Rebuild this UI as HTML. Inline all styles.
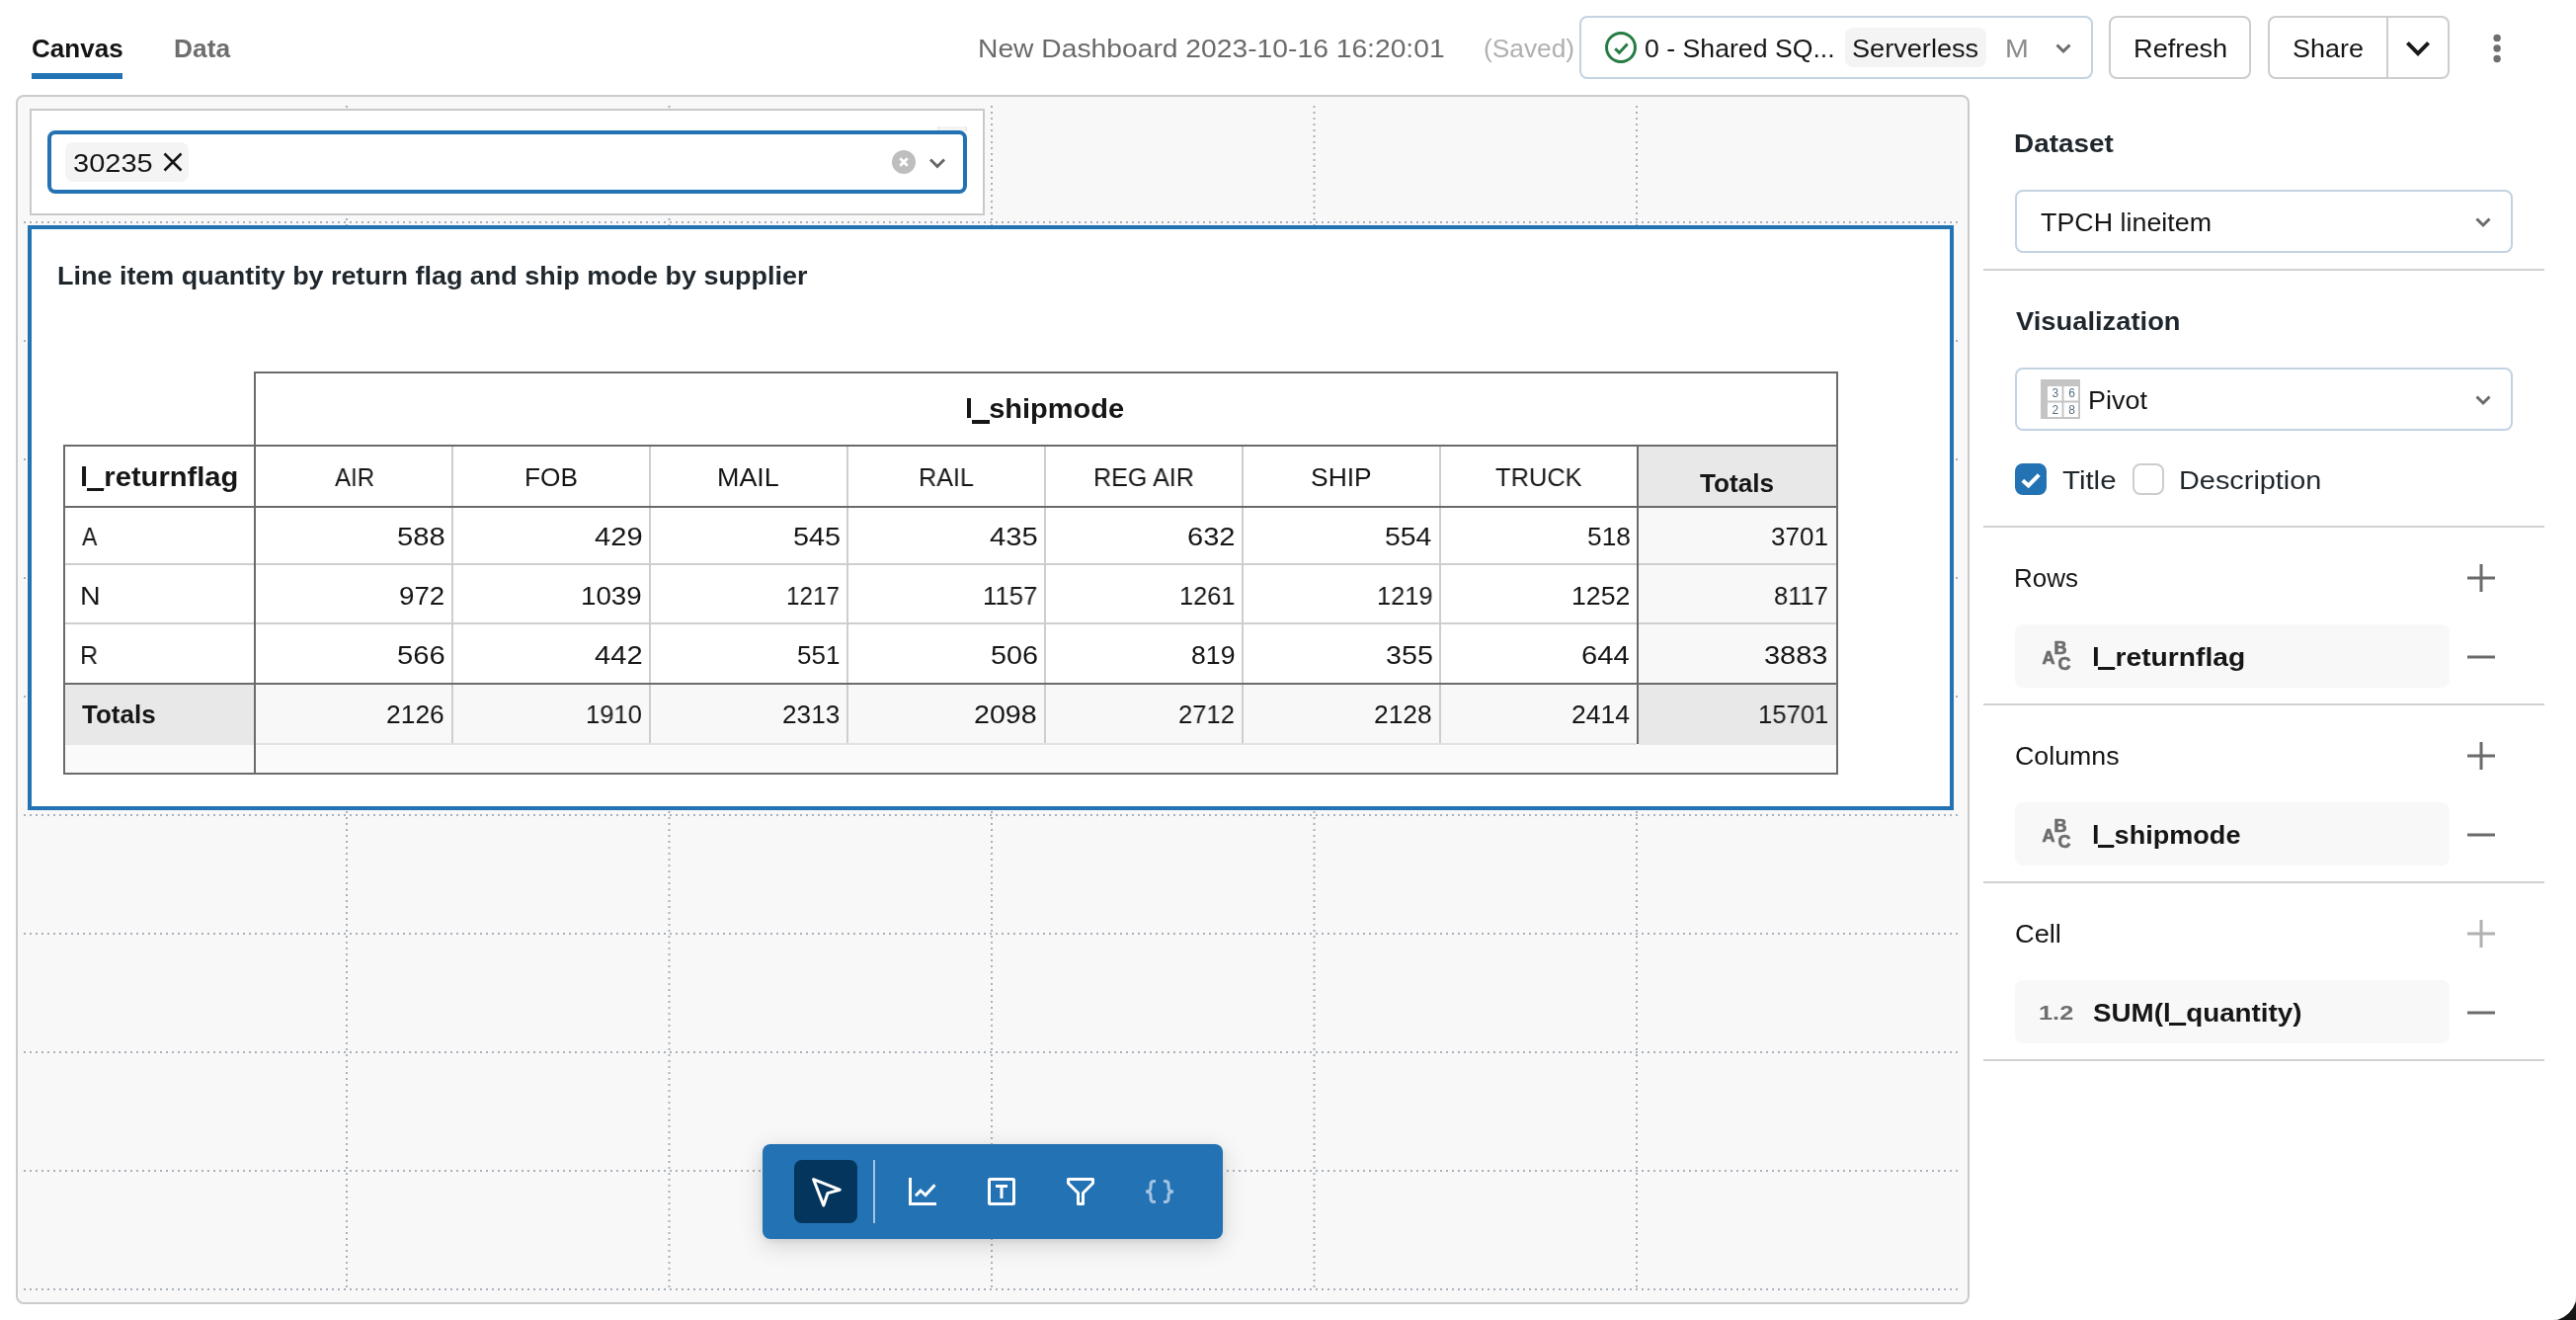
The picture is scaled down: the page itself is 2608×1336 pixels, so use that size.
<!DOCTYPE html>
<html lang="en">
<head>
<meta charset="utf-8">
<title>New Dashboard 2023-10-16 16:20:01</title>
<style>
*{box-sizing:border-box;margin:0;padding:0}
html,body{width:2608px;height:1336px;overflow:hidden;background:#fff}
body{position:relative;font-family:"Liberation Sans",Arial,sans-serif;font-size:26px;color:#161616;line-height:32px}
.abs,svg{position:absolute}
svg{will-change:transform}
#header,#canvas-wrap,#side{position:absolute;left:0;top:0;width:0;height:0;transform:translateZ(0)}
.t{position:absolute;white-space:nowrap;line-height:32px;height:32px;will-change:transform}
.b{font-weight:700}
#tab-ul{left:32px;top:74px;width:92px;height:6px;background:#2272b4}
.btn{position:absolute;top:16px;height:64px;border:2px solid #cdcdcd;border-radius:8px;background:#fff}
#wh{left:1599px;width:520px;border-color:#c3d3e2}
#tag-sl{left:1868px;top:28px;width:143px;height:40px;border-radius:8px;background:#f4f4f4}
#canvas{left:16px;top:96px;width:1978px;height:1224px;border:2px solid #cbcbcb;border-radius:8px;background:#f8f8f8}
#filterw{left:30px;top:110px;width:967px;height:108px;border:2px solid #c9c9c9;background:#fff}
#sel{left:48px;top:132px;width:931px;height:64px;border:4px solid #2272b4;border-radius:8px;background:#fff}
#tag{left:66px;top:144px;width:125px;height:40px;border-radius:8px;background:#f4f4f4}
#pivotw{left:28px;top:228px;width:1950px;height:592px;border:4px solid #2272b4;background:#fff}
.hr{position:absolute;left:2008px;width:568px;height:2px;background:#d1d1d1}
.sel2{position:absolute;left:2040px;width:504px;height:64px;border:2px solid #c3d3e2;border-radius:8px;background:#fff}
.pill{position:absolute;left:2040px;width:440px;height:64px;border-radius:8px;background:#f8f8f8}
.ln{position:absolute}
.dk{background:#6b6b6b}
.lt{background:#cecece}
#toolbar{left:772px;top:1158px;width:466px;height:96px;border-radius:8px;background:#2272b4;box-shadow:0 6px 24px rgba(0,0,0,.16),0 2px 6px rgba(0,0,0,.08)}
#tb-active{left:804px;top:1174px;width:64px;height:64px;border-radius:8px;background:#04355d}
#tb-div{left:884px;top:1174px;width:2px;height:64px;background:#a6c5e1}
.cb{position:absolute;top:469px;width:32px;height:32px;border-radius:8px}
</style>
</head>
<body>
<!-- ===== HEADER ===== -->
<div id="header">
<div class="abs" id="tab-ul"></div>
<div class="btn" id="wh"></div>
<svg style="left:1625px;top:32px" width="32" height="32" viewBox="0 0 32 32"><circle cx="16" cy="16" r="14.5" fill="none" stroke="#277c43" stroke-width="3"/><path d="M10.2 17.2l4.200 4.200 8.200-9" fill="none" stroke="#277c43" stroke-width="3"/></svg>
<div class="abs" id="tag-sl"></div>
<svg style="left:2079px;top:39px" width="20" height="20" viewBox="0 0 20 20"><path d="M3.500 6.500l6.500 6.500 6.500-6.500" fill="none" stroke="#6b6b6b" stroke-width="3"/></svg>
<div class="btn" style="left:2135px;width:144px"></div>
<div class="btn" style="left:2296px;width:184px"></div>
<div class="abs" style="left:2416px;top:18px;width:2px;height:60px;background:#cdcdcd"></div>
<svg style="left:2432px;top:33px" width="32" height="32" viewBox="0 0 32 32"><path d="M5.400 10.400l10.600 10.700 10.600-10.700" fill="none" stroke="#1a1a1a" stroke-width="4"/></svg>
<svg style="left:2522px;top:32px" width="12" height="32" viewBox="0 0 12 32"><circle cx="6.100" cy="6.400" r="3.700" fill="#6e6e6e"/><circle cx="6.100" cy="17" r="3.700" fill="#6e6e6e"/><circle cx="6.100" cy="27.500" r="3.700" fill="#6e6e6e"/></svg>
<div class="t b" style="left:32.20px;top:32.79px;color:#141414;transform:scaleX(1.0022);transform-origin:0 0;">Canvas</div>
<div class="t b" style="left:175.77px;top:32.79px;color:#6e6e6e;transform:scaleX(1.0127);transform-origin:0 0;">Data</div>
<div class="t" style="left:989.73px;top:32.99px;color:#6a6a6a;transform:scaleX(1.0863);transform-origin:0 0;">New Dashboard 2023-10-16 16:20:01</div>
<div class="t" style="left:1502.18px;top:32.99px;color:#b0b0b0;transform:scaleX(1.0114);transform-origin:0 0;">(Saved)</div>
<div class="t" style="left:1665.47px;top:32.79px;transform:scaleX(1.0254);transform-origin:0 0;">0 - Shared SQ...</div>
<div class="t" style="left:1874.71px;top:32.79px;transform:scaleX(1.0433);transform-origin:0 0;">Serverless</div>
<div class="t" style="left:2029.80px;top:32.79px;color:#8c8c8c;transform:scaleX(1.1000);transform-origin:0 0;">M</div>
<div class="t" style="left:2160.21px;top:32.99px;transform:scaleX(1.0460);transform-origin:0 0;">Refresh</div>
<div class="t" style="left:2320.83px;top:32.99px;transform:scaleX(1.0364);transform-origin:0 0;">Share</div>
</div>

<!-- ===== CANVAS ===== -->
<div id="canvas-wrap">
<div class="abs" id="canvas"></div>
<svg id="grid" style="left:0;top:0" width="2000" height="1336" viewBox="0 0 2000 1336">
<g stroke="#a9b1bb" stroke-width="2" stroke-dasharray="2 4" fill="none">
<path d="M351 107V1306M677.500 107V1306M1004 107V1306M1330.500 107V1306M1657 107V1306"/>
<path d="M24 225H1982M24 345H1982M24 465H1982M24 585H1982M24 705H1982M24 825H1982M24 945H1982M24 1065H1982M24 1185H1982M24 1305H1982"/>
</g>
</svg>
<div class="abs" id="filterw"></div>
<div class="abs" style="left:949px;top:128px;width:30px;height:5px;background:#f4f4f4;border-left:2px solid #ececec;border-right:2px solid #ececec"></div>
<div class="abs" id="sel"></div>
<div class="abs" id="tag"></div>
<svg style="left:163px;top:152px" width="24" height="24" viewBox="0 0 24 24"><path d="M3.500 3.500l17 17M20.500 3.500l-17 17" fill="none" stroke="#161616" stroke-width="2.600"/></svg>
<svg style="left:903px;top:152px" width="24" height="24" viewBox="0 0 24 24"><circle cx="12" cy="12" r="12" fill="#bebebe"/><path d="M8.300 8.300l7.400 7.400M15.700 8.300l-7.400 7.400" stroke="#fff" stroke-width="2.700" fill="none"/></svg>
<svg style="left:939px;top:154.800px" width="20" height="20" viewBox="0 0 20 20"><path d="M3 6.500l7 7 7-7" fill="none" stroke="#666" stroke-width="2.800"/></svg>
<div class="abs" id="pivotw"></div>
<div class="t" style="left:74.48px;top:149.29px;transform:scaleX(1.1157);transform-origin:0 0;">30235</div>
<div class="t b" style="left:58.03px;top:262.69px;color:#1f272d;transform:scaleX(1.0368);transform-origin:0 0;">Line item quantity by return flag and ship mode by supplier</div>
<div id="pivot-table">
<div class="ln" style="left:1659px;top:452px;width:200px;height:60px;background:#e8e8e8;"></div>
<div class="ln" style="left:1659px;top:514px;width:200px;height:177px;background:#f8f8f8;"></div>
<div class="ln" style="left:66px;top:693px;width:191px;height:61px;background:#e8e8e8;"></div>
<div class="ln" style="left:259px;top:693px;width:1398px;height:59px;background:#f8f8f8;"></div>
<div class="ln" style="left:1659px;top:693px;width:200px;height:61px;background:#e8e8e8;"></div>
<div class="ln" style="left:66px;top:754px;width:191px;height:28px;background:#fafafa;"></div>
<div class="ln" style="left:259px;top:754px;width:1600px;height:28px;background:#fafafa;"></div>
<div class="ln lt" style="left:457px;top:452px;width:2px;height:300px;"></div>
<div class="ln lt" style="left:657px;top:452px;width:2px;height:300px;"></div>
<div class="ln lt" style="left:857px;top:452px;width:2px;height:300px;"></div>
<div class="ln lt" style="left:1057px;top:452px;width:2px;height:300px;"></div>
<div class="ln lt" style="left:1257px;top:452px;width:2px;height:300px;"></div>
<div class="ln lt" style="left:1457px;top:452px;width:2px;height:300px;"></div>
<div class="ln lt" style="left:66px;top:570px;width:1793px;height:2px;"></div>
<div class="ln lt" style="left:66px;top:630px;width:1793px;height:2px;"></div>
<div class="ln" style="left:259px;top:752px;width:1398px;height:2px;background:#e2e2e2;"></div>
<div class="ln dk" style="left:257px;top:376px;width:1604px;height:2px;"></div>
<div class="ln dk" style="left:64px;top:450px;width:1797px;height:2px;"></div>
<div class="ln dk" style="left:64px;top:512px;width:1797px;height:2px;"></div>
<div class="ln dk" style="left:64px;top:691px;width:1797px;height:2px;"></div>
<div class="ln dk" style="left:64px;top:782px;width:1797px;height:2px;"></div>
<div class="ln dk" style="left:64px;top:450px;width:2px;height:334px;"></div>
<div class="ln dk" style="left:257px;top:376px;width:2px;height:408px;"></div>
<div class="ln dk" style="left:1657px;top:450px;width:2px;height:303px;"></div>
<div class="ln dk" style="left:1859px;top:376px;width:2px;height:408px;"></div>
<div class="t b" style="left:977.43px;top:398.20px;font-size:28px;transform:scaleX(1.0359);transform-origin:0 0;">l_shipmode</div>
<div class="abs" style="left:984.19px;top:425.19px;width:17.33px;height:3.44px;background:#161616"></div>
<div class="t b" style="left:81.22px;top:466.60px;font-size:28px;transform:scaleX(1.0413);transform-origin:0 0;">l_returnflag</div>
<div class="abs" style="left:88.02px;top:493.59px;width:17.42px;height:3.44px;background:#161616"></div>
<div class="t" style="left:338.90px;top:467.29px;transform:scaleX(0.9286);transform-origin:0 0;">AIR</div>
<div class="t" style="left:531.13px;top:467.29px;transform:scaleX(1.0100);transform-origin:0 0;">FOB</div>
<div class="t" style="left:726.33px;top:467.29px;transform:scaleX(1.0345);transform-origin:0 0;">MAIL</div>
<div class="t" style="left:929.81px;top:467.29px;transform:scaleX(0.9691);transform-origin:0 0;">RAIL</div>
<div class="t" style="left:1107.22px;top:467.29px;transform:scaleX(0.9657);transform-origin:0 0;">REG AIR</div>
<div class="t" style="left:1327.36px;top:467.29px;transform:scaleX(1.0175);transform-origin:0 0;">SHIP</div>
<div class="t" style="left:1514.42px;top:467.29px;transform:scaleX(0.9773);transform-origin:0 0;">TRUCK</div>
<div class="t b" style="left:1721.30px;top:473.39px;transform:scaleX(1.0068);transform-origin:0 0;">Totals</div>
<div class="t" style="left:83.30px;top:526.99px;transform:scaleX(0.8882);transform-origin:0 0;">A</div>
<div class="t" style="left:402.08px;top:526.99px;transform:scaleX(1.1220);transform-origin:0 0;">588</div>
<div class="t" style="left:602.18px;top:526.99px;transform:scaleX(1.1195);transform-origin:0 0;">429</div>
<div class="t" style="left:802.69px;top:526.99px;transform:scaleX(1.1073);transform-origin:0 0;">545</div>
<div class="t" style="left:1001.98px;top:526.99px;transform:scaleX(1.1244);transform-origin:0 0;">435</div>
<div class="t" style="left:1202.28px;top:526.99px;transform:scaleX(1.1171);transform-origin:0 0;">632</div>
<div class="t" style="left:1402.21px;top:526.99px;transform:scaleX(1.0929);transform-origin:0 0;">554</div>
<div class="t" style="left:1606.69px;top:526.99px;transform:scaleX(1.0122);transform-origin:0 0;">518</div>
<div class="t" style="left:1792.60px;top:526.99px;transform:scaleX(0.9982);transform-origin:0 0;">3701</div>
<div class="t" style="left:81.10px;top:586.99px;transform:scaleX(1.1000);transform-origin:0 0;">N</div>
<div class="t" style="left:404.43px;top:586.99px;transform:scaleX(1.0659);transform-origin:0 0;">972</div>
<div class="t" style="left:588.37px;top:586.99px;transform:scaleX(1.0673);transform-origin:0 0;">1039</div>
<div class="t" style="left:796.14px;top:586.99px;transform:scaleX(0.9309);transform-origin:0 0;">1217</div>
<div class="t" style="left:994.82px;top:586.99px;transform:scaleX(0.9887);transform-origin:0 0;">1157</div>
<div class="t" style="left:1193.75px;top:586.99px;transform:scaleX(0.9727);transform-origin:0 0;">1261</div>
<div class="t" style="left:1393.65px;top:586.99px;transform:scaleX(0.9745);transform-origin:0 0;">1219</div>
<div class="t" style="left:1590.75px;top:586.99px;transform:scaleX(1.0255);transform-origin:0 0;">1252</div>
<div class="t" style="left:1795.62px;top:586.99px;transform:scaleX(0.9796);transform-origin:0 0;">8117</div>
<div class="t" style="left:81.37px;top:646.99px;transform:scaleX(0.9667);transform-origin:0 0;">R</div>
<div class="t" style="left:402.08px;top:646.99px;transform:scaleX(1.1220);transform-origin:0 0;">566</div>
<div class="t" style="left:602.18px;top:646.99px;transform:scaleX(1.1195);transform-origin:0 0;">442</div>
<div class="t" style="left:807.40px;top:646.99px;transform:scaleX(0.9951);transform-origin:0 0;">551</div>
<div class="t" style="left:1002.69px;top:646.99px;transform:scaleX(1.1073);transform-origin:0 0;">506</div>
<div class="t" style="left:1206.18px;top:646.99px;transform:scaleX(1.0244);transform-origin:0 0;">819</div>
<div class="t" style="left:1402.90px;top:646.99px;transform:scaleX(1.1024);transform-origin:0 0;">355</div>
<div class="t" style="left:1600.98px;top:646.99px;transform:scaleX(1.1214);transform-origin:0 0;">644</div>
<div class="t" style="left:1785.99px;top:646.99px;transform:scaleX(1.1143);transform-origin:0 0;">3883</div>
<div class="t b" style="left:83.30px;top:706.79px;transform:scaleX(0.9959);transform-origin:0 0;">Totals</div>
<div class="t" style="left:391.28px;top:706.79px;transform:scaleX(1.0161);transform-origin:0 0;">2126</div>
<div class="t" style="left:593.24px;top:706.79px;transform:scaleX(0.9818);transform-origin:0 0;">1910</div>
<div class="t" style="left:791.79px;top:706.79px;transform:scaleX(1.0071);transform-origin:0 0;">2313</div>
<div class="t" style="left:986.40px;top:706.79px;transform:scaleX(1.1018);transform-origin:0 0;">2098</div>
<div class="t" style="left:1193.22px;top:706.79px;transform:scaleX(0.9821);transform-origin:0 0;">2712</div>
<div class="t" style="left:1391.39px;top:706.79px;transform:scaleX(1.0143);transform-origin:0 0;">2128</div>
<div class="t" style="left:1591.08px;top:706.79px;transform:scaleX(1.0196);transform-origin:0 0;">2414</div>
<div class="t" style="left:1779.53px;top:706.79px;transform:scaleX(0.9855);transform-origin:0 0;">15701</div>
</div>
<div class="abs" id="toolbar"></div>
<div class="abs" id="tb-active"></div>
<div class="abs" id="tb-div"></div>
<svg style="left:820px;top:1190px" width="32" height="32" viewBox="0 0 32 32"><path d="M3.600 3.600L30.200 14.200 18 17.600 13.800 30Z" fill="none" stroke="#fff" stroke-width="3" stroke-linejoin="round"/></svg>
<svg style="left:918px;top:1190px" width="32" height="32" viewBox="0 0 32 32"><path d="M3.500 2V28.500H30" fill="none" stroke="#fff" stroke-width="3"/><path d="M9 20.300l5-5.300 5 4.600 9.500-10.300" fill="none" stroke="#fff" stroke-width="3"/></svg>
<svg style="left:998px;top:1190px" width="32" height="32" viewBox="0 0 32 32"><rect x="3.500" y="3.500" width="25" height="25" rx="1" fill="none" stroke="#fff" stroke-width="3"/><path d="M10 10.400h12M16 10.400V23" fill="none" stroke="#fff" stroke-width="3"/></svg>
<svg style="left:1078px;top:1190px" width="32" height="32" viewBox="0 0 32 32"><path d="M3.500 3.500H28.500V7.500L18.500 17.500V28.500H13.500V17.500L3.500 7.500Z" fill="none" stroke="#fff" stroke-width="3" stroke-linejoin="round"/></svg>
<svg style="left:1158px;top:1190px" width="32" height="32" viewBox="0 0 32 32"><g fill="none" stroke="#a3c2e2" stroke-width="3"><path d="M12 5.500h-1.500q-3.500 0-3.500 3.500v3q0 4-5 4q5 0 5 4v3q0 3.500 3.500 3.500h1.500"/><path d="M20 5.500h1.500q3.500 0 3.500 3.500v3q0 4 5 4q-5 0-5 4v3q0 3.500-3.500 3.500h-1.500"/></g></svg>
</div>

<!-- ===== SIDE PANEL ===== -->
<div id="side">
<div class="sel2" style="top:192px"></div>
<svg style="left:2503.6px;top:214.5px" width="20" height="20" viewBox="0 0 20 20"><path d="M3.500 6.500l6.500 6.500 6.500-6.500" fill="none" stroke="#6b6b6b" stroke-width="3"/></svg>
<div class="hr" style="top:272px"></div>
<div class="sel2" style="top:372px"></div>
<svg style="left:2066px;top:384px" width="40" height="40" viewBox="0 0 40 40"><rect width="40" height="40" fill="#c4c4c4"/><rect x="7" y="7" width="14.500" height="14.500" fill="#fff"/><rect x="23.500" y="7" width="14.500" height="14.500" fill="#fff"/><rect x="7" y="23.500" width="14.500" height="14.500" fill="#fff"/><rect x="23.500" y="23.500" width="14.500" height="14.500" fill="#fff"/><g font-family="Liberation Sans,Arial,sans-serif" font-size="12" fill="#5a6f80"><text x="11.500" y="18.300">3</text><text x="28.200" y="18.300">6</text><text x="11.500" y="35">2</text><text x="28.200" y="35">8</text></g></svg>
<svg style="left:2503.6px;top:394.5px" width="20" height="20" viewBox="0 0 20 20"><path d="M3.500 6.500l6.500 6.500 6.500-6.500" fill="none" stroke="#6b6b6b" stroke-width="3"/></svg>
<div class="cb" style="left:2040px;background:#2272b4"></div>
<svg style="left:2040px;top:469px" width="32" height="32" viewBox="0 0 32 32"><path d="M7.800 17.300L13.600 22.500 24.300 11.600" fill="none" stroke="#fff" stroke-width="4"/></svg>
<div class="cb" style="left:2159px;border:2px solid #cdcdcd;background:#fff"></div>
<div class="hr" style="top:532px"></div>
<svg style="left:2496px;top:569px" width="32" height="32" viewBox="0 0 32 32"><path d="M2 16H30M16 2V30" stroke="#6b6b6b" stroke-width="3" fill="none"/></svg>
<div class="pill" style="top:632px"></div>
<svg style="left:2064px;top:644px" width="40" height="40" viewBox="0 0 40 40"><g font-family="Liberation Sans,Arial,sans-serif" font-weight="700" font-size="18" fill="#6e6e6e" stroke="#6e6e6e" stroke-width=".7"><text x="3.500" y="28">A</text><text x="15.500" y="17.700">B</text><text x="19.500" y="34">C</text></g></svg>
<svg style="left:2496px;top:649px" width="32" height="32" viewBox="0 0 32 32"><path d="M2 16H30" stroke="#6b6b6b" stroke-width="3" fill="none"/></svg>
<div class="hr" style="top:712px"></div>
<svg style="left:2496px;top:749px" width="32" height="32" viewBox="0 0 32 32"><path d="M2 16H30M16 2V30" stroke="#6b6b6b" stroke-width="3" fill="none"/></svg>
<div class="pill" style="top:812px"></div>
<svg style="left:2064px;top:824px" width="40" height="40" viewBox="0 0 40 40"><g font-family="Liberation Sans,Arial,sans-serif" font-weight="700" font-size="18" fill="#6e6e6e" stroke="#6e6e6e" stroke-width=".7"><text x="3.500" y="28">A</text><text x="15.500" y="17.700">B</text><text x="19.500" y="34">C</text></g></svg>
<svg style="left:2496px;top:829px" width="32" height="32" viewBox="0 0 32 32"><path d="M2 16H30" stroke="#6b6b6b" stroke-width="3" fill="none"/></svg>
<div class="hr" style="top:892px"></div>
<svg style="left:2496px;top:929px" width="32" height="32" viewBox="0 0 32 32"><path d="M2 16H30M16 2V30" stroke="#b0b0b0" stroke-width="3" fill="none"/></svg>
<div class="pill" style="top:992px"></div>
<svg style="left:2496px;top:1009px" width="32" height="32" viewBox="0 0 32 32"><path d="M2 16H30" stroke="#6b6b6b" stroke-width="3" fill="none"/></svg>
<div class="hr" style="top:1072px"></div>
<div class="t b" style="left:2038.85px;top:129.29px;color:#1f272d;transform:scaleX(1.0728);transform-origin:0 0;">Dataset</div>
<div class="t" style="left:2065.57px;top:208.69px;transform:scaleX(1.0327);transform-origin:0 0;">TPCH lineitem</div>
<div class="t b" style="left:2041.00px;top:308.99px;color:#1f272d;transform:scaleX(1.0510);transform-origin:0 0;">Visualization</div>
<div class="t" style="left:2113.73px;top:388.79px;transform:scaleX(1.0357);transform-origin:0 0;">Pivot</div>
<div class="t" style="left:2088.27px;top:470.39px;color:#1f272d;transform:scaleX(1.1326);transform-origin:0 0;">Title</div>
<div class="t" style="left:2205.98px;top:470.39px;color:#1f272d;transform:scaleX(1.1103);transform-origin:0 0;">Description</div>
<div class="t" style="left:2039.00px;top:568.99px;transform:scaleX(1.0000);transform-origin:0 0;">Rows</div>
<div class="t b" style="left:2117.63px;top:648.89px;transform:scaleX(1.0849);transform-origin:0 0;">l_returnflag</div>
<div class="abs" style="left:2124.17px;top:675.10px;width:16.89px;height:3.20px;background:#161616"></div>
<div class="t" style="left:2039.97px;top:748.99px;transform:scaleX(1.0297);transform-origin:0 0;">Columns</div>
<div class="t b" style="left:2117.72px;top:828.89px;transform:scaleX(1.0415);transform-origin:0 0;">l_shipmode</div>
<div class="abs" style="left:2123.94px;top:855.10px;width:16.26px;height:3.20px;background:#161616"></div>
<div class="t" style="left:2039.95px;top:928.99px;transform:scaleX(1.0476);transform-origin:0 0;">Cell</div>
<div class="t b" style="left:2064.29px;top:1008.72px;font-size:21px;color:#6e6e6e;transform:scaleX(1.2074);transform-origin:0 0;">1.2</div>
<div class="t b" style="left:2118.73px;top:1008.89px;transform:scaleX(1.0689);transform-origin:0 0;">SUM(l_quantity)</div>
<div class="abs" style="left:2196.16px;top:1035.10px;width:16.66px;height:3.20px;background:#161616"></div>
</div>

<svg style="left:2584px;top:1312px" width="24" height="24" viewBox="0 0 24 24"><path d="M24 0V24H0A24 24 0 0 0 24 0Z" fill="#151515" fill-opacity=".3"/><path d="M24 5.500A31 31 0 0 1 5.500 24H24Z" fill="#151515"/></svg>
</body>
</html>
